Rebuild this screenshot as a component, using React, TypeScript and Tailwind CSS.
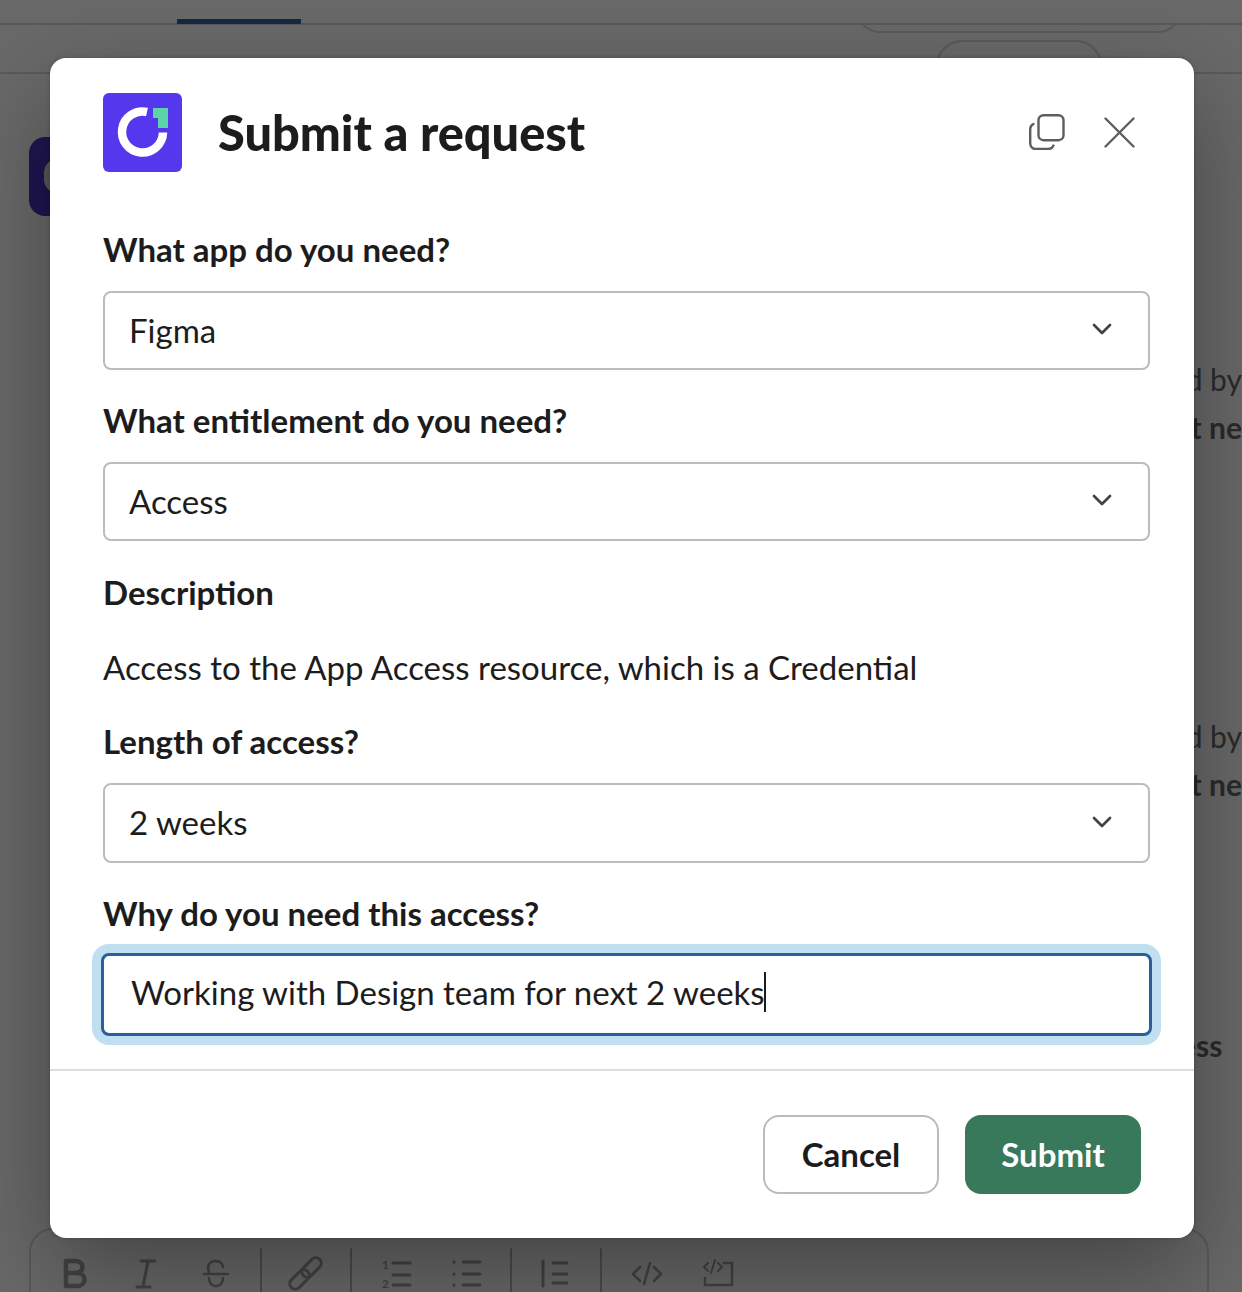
import { ChevronDown } from "lucide-react";

const lato = "font-['Lato','Liberation_Sans',sans-serif]";

function Label({ children }: { children: React.ReactNode }) {
  return <div className="h-[40px] text-[33px] leading-[38px] font-bold text-[#1d1c1d]">{children}</div>;
}

function Select({ value, tall }: { value: string; tall?: boolean }) {
  return (
    <div className={`${tall ? "h-[80px]" : "h-[79px]"} w-[1047px] rounded-[8px] border-2 border-[#bcbcbc] bg-white flex items-center justify-between pl-[25px] pr-[31px]`}>
      <span className="text-[33px] leading-[38px] text-[#1d1c1d] -ml-[1px] mb-[2px]">{value}</span>
      <ChevronDown className="w-[32px] h-[32px] text-[#454245] -mt-[3px] translate-x-[1px]" strokeWidth={2} />
    </div>
  );
}

function Toolbar() {
  return (
    <svg width="760" height="64" viewBox="0 0 760 64" fill="none" stroke="#434343" strokeWidth="2.5" strokeLinecap="round" className="block">
      <path d="M66 33V58M66 33H75C85 33 85 45 75 45H66M66 45H77C87 45 87 58 77 58H66" strokeWidth="4.5" />
      <path d="M141 33H155M137 59H150M148 33L143 59" strokeWidth="3" />
      <path d="M204 46H228M209 44C206 36 211 33 216 33C220 33 223 36 223 39M209 50C209 61 223 61 223 50" />
      <path d="M261 21V64M351 21V64M511 21V64M601 21V64" strokeWidth="1.5" />
      <rect x="300" y="34" width="23" height="11" rx="5.5" transform="rotate(-45 311.5 39.5)" strokeWidth="3" />
      <rect x="288" y="46" width="23" height="11" rx="5.5" transform="rotate(-45 299.5 51.5)" strokeWidth="3" />
      <text x="382" y="41" fontSize="12" fontWeight="700" fill="#434343" stroke="none">1</text>
      <text x="382" y="60" fontSize="12" fontWeight="700" fill="#434343" stroke="none">2</text>
      <path d="M393 35H410M393 47H410M393 57H410" strokeWidth="3" />
      <path d="M454 34V34.5M454 46V46.5M454 57V57.5M463 34H480M463 46H480M463 57H480" strokeWidth="2.8" />
      <path d="M543 33V58" strokeWidth="3" />
      <path d="M553 35H567M553 46H567M553 55H567" strokeWidth="2.8" />
      <path d="M640 39L633 46L640 53M654 39L661 46L654 53M650 35L644 56" />
      <path d="M708 35L704 39L708 43M718 35L722 39L718 43M715 32L711 45" strokeWidth="2" />
      <path d="M724 35H732V57H705V50" strokeWidth="2.5" />
    </svg>
  );
}

export default function App() {
  return (
    <div className={`relative w-[1242px] h-[1292px] overflow-hidden bg-[#696969] ${lato}`}>
      {/* dimmed page behind the dialog */}
      <div className="h-[25px] border-b-2 border-[#595959] flex">
        <div className="ml-[177px] mt-[19px] w-[124px] h-[5px] bg-[#142a44]" />
      </div>
      <div className="h-[49px] border-b-2 border-[#5a5a5a] relative overflow-hidden">
        <div className="absolute left-[856px] -top-[40px] w-[326px] h-[48px] rounded-[24px] border-2 border-[#595959]" />
        <div className="absolute left-[936px] top-[15px] w-[166px] h-[60px] rounded-[26px] border-2 border-[#595959]" />
      </div>
      <div className="absolute left-[29px] top-[137px] w-[60px] h-[79px] rounded-[16px] bg-[#1f1550]" />
      <div className="absolute left-[44px] top-[158px] w-[30px] h-[36px] rounded-full bg-[#5a5a5a]" />

      <div className="absolute left-[1160px] top-[355px] w-[82px] text-[30px] leading-[48px] whitespace-nowrap text-[#2b2b2b]">
        <div className="flex justify-end">d by</div>
        <div className="flex justify-end font-bold">t ne</div>
      </div>
      <div className="absolute left-[1160px] top-[712px] w-[82px] text-[30px] leading-[48px] whitespace-nowrap text-[#2b2b2b]">
        <div className="flex justify-end">d by</div>
        <div className="flex justify-end font-bold">t ne</div>
      </div>
      <div className="absolute left-[1180px] top-[1021px] text-[30px] leading-[48px] font-bold text-[#2b2b2b]">ess</div>

      <div className="absolute left-[29px] top-[1228px] w-[1180px] h-[80px] rounded-t-[24px] border-2 border-[#5a5a5a]">
        <div className="-ml-[31px] -mt-[2px]"><Toolbar /></div>
      </div>

      {/* dialog */}
      <div className="absolute left-[50px] top-[58px] w-[1144px] h-[1180px] rounded-[16px] bg-white shadow-[0_36px_96px_rgba(0,0,0,0.35),0_0_4px_rgba(0,0,0,0.2)] flex flex-col">
        <div className="flex items-center pl-[53px] pr-[59px] pt-[35px]">
          <div className="w-[79px] h-[79px] rounded-[6px] bg-[#5537ee] shrink-0">
            <svg width="79" height="79" viewBox="0 0 79 79" fill="none" className="block">
              <path d="M44 19A20.5 20.5 0 1 0 60 39.5" stroke="#fff" strokeWidth="8.5" />
              <path d="M50 15H65V35H55V25H50Z" fill="#5cd3a9" />
            </svg>
          </div>
          <h1 className="ml-[36px] text-[48.7px] leading-[56px] font-black text-[#1d1c1d] whitespace-nowrap -mt-[1px]">Submit a request</h1>
          <div className="ml-auto flex items-center gap-[39px] -mt-[2px]">
            <svg width="36" height="36" viewBox="0 0 36 36" fill="none" stroke="#5e5d60" strokeWidth="2.4" strokeLinecap="round" className="block">
              <rect x="9.5" y="1.2" width="25" height="25" rx="5" />
              <path d="M4.5 10C2.5 11 1.2 12.5 1.2 15V29C1.2 32.5 3.5 35 7 35H19C21.5 35 23.5 34 24.5 31.5" />
            </svg>
            <svg width="31" height="31" viewBox="0 0 31 31" fill="none" stroke="#5e5d60" strokeWidth="2.4" strokeLinecap="round" className="block mt-[1px]">
              <path d="M1.5 1.5L29.5 29.5M29.5 1.5L1.5 29.5" />
            </svg>
          </div>
        </div>

        <div className="pl-[53px] pt-[58px] flex flex-col">
          <Label>What app do you need?</Label>
          <div className="mt-[21px]"><Select value="Figma" /></div>
          <div className="mt-[31px]"><Label>What entitlement do you need?</Label></div>
          <div className="mt-[21px]"><Select value="Access" /></div>
          <div className="mt-[32px]"><Label>Description</Label></div>
          <div className="mt-[35px] h-[40px] text-[33px] leading-[38px] text-[#1d1c1d]">Access to the App Access resource, which is a Credential</div>
          <div className="mt-[34px]"><Label>Length of access?</Label></div>
          <div className="mt-[21px]"><Select value="2 weeks" tall /></div>
          <div className="mt-[31px]"><Label>Why do you need this access?</Label></div>
          <div className="mt-[19px] -ml-[2px] h-[83px] w-[1051px] rounded-[8px] border-[3px] border-[#2a6099] bg-white shadow-[0_0_0_9px_#c0dff0] flex items-center pl-[27px] pb-[6px]">
            <span className="text-[33px] leading-[40px] text-[#1d1c1d]">Working with Design team for next 2 weeks</span>
            <span className="w-[2px] h-[40px] bg-[#1d1c1d] -ml-[1px]" />
          </div>
        </div>

        <div className="mt-[33px] h-[2px] bg-[#dddddd]" />
        <div className="flex justify-end gap-[26px] pr-[53px] pt-[44px]">
          <button className={`${lato} w-[176px] h-[79px] rounded-[16px] border-2 border-[#bbbbbb] bg-white text-[33px] font-bold text-[#1d1c1d]`}>Cancel</button>
          <button className={`${lato} w-[176px] h-[79px] rounded-[16px] bg-[#38795c] text-[33px] font-bold text-white`}>Submit</button>
        </div>
      </div>
    </div>
  );
}
